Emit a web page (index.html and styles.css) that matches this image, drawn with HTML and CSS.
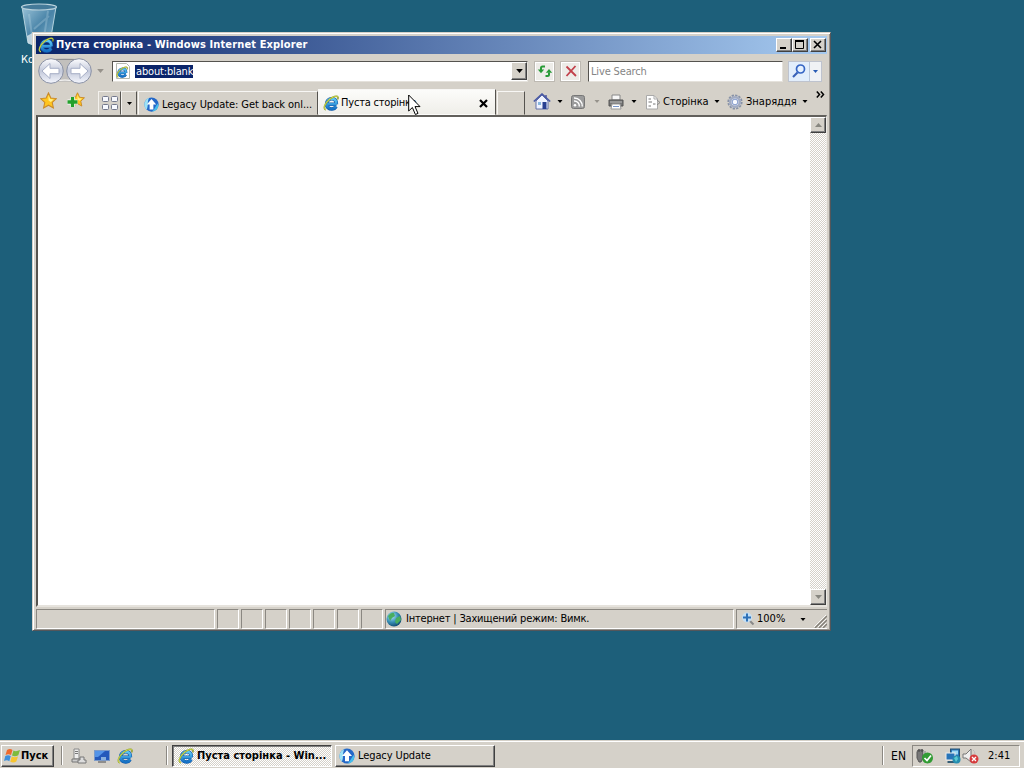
FILE: index.html
```html
<!DOCTYPE html>
<html lang="uk">
<head>
  <meta charset="UTF-8" />
  <title>Пуста сторінка - Windows Internet Explorer</title>
  <link rel="stylesheet" href="styles.css">
</head>
<body>

<!-- shared icons -->
<svg class="defs" width="0" height="0">
  <defs>
    <linearGradient id="blueE" x1="0" y1="0" x2="0" y2="1">
      <stop offset="0" stop-color="#5cc8f6"/><stop offset="1" stop-color="#1470c4"/>
    </linearGradient>
    <radialGradient id="globe" cx=".35" cy=".3" r=".8">
      <stop offset="0" stop-color="#b9ecff"/><stop offset=".5" stop-color="#3a92b8"/><stop offset="1" stop-color="#0b3f64"/>
    </radialGradient>
    <linearGradient id="bin" x1="0" y1="0" x2="1" y2="1">
      <stop offset="0" stop-color="#a9cfe3"/><stop offset=".5" stop-color="#4e88ad"/><stop offset="1" stop-color="#8fbdd6"/>
    </linearGradient>
    <linearGradient id="round" x1="0" y1="0" x2="0" y2="1">
      <stop offset="0" stop-color="#fdfdff"/><stop offset=".5" stop-color="#c3c9da"/><stop offset="1" stop-color="#f4f6fd"/>
    </linearGradient>
  </defs>
  <symbol id="ie" viewBox="0 0 16 16">
    <path d="M13.400 9.200H5M13 11.400C12 13.300 10.600 14 8.800 14C5.800 14 3.600 12 3.600 9C3.600 6 5.800 3.800 8.800 3.800C11.800 3.800 13.400 6 13.400 9.200" fill="none" stroke="#1158a8" stroke-width="3.600"/>
    <path d="M13.400 9.200H5M13 11.400C12 13.300 10.600 14 8.800 14C5.800 14 3.600 12 3.600 9C3.600 6 5.800 3.800 8.800 3.800C11.800 3.800 13.400 6 13.400 9.200" fill="none" stroke="url(#blueE)" stroke-width="2.500"/>
    <path d="M3 14.800C-.2 14.300 1.500 8.500 6 4.800C9.500 1.700 14.300 .2 15 2.200C15.200 3 15 3.800 14.600 4.500" fill="none" stroke="#8d9a2a" stroke-width="1.500"/>
    <path d="M3 14.800C-.2 14.300 1.500 8.500 6 4.800C9.500 1.700 14.300 .2 15 2.200" fill="none" stroke="#d6e154" stroke-width=".9"/>
  </symbol>
  <symbol id="legacy" viewBox="0 0 16 16">
    <circle cx="8" cy="8" r="7.600" fill="#2468c8"/>
    <path d="M1.500 12A7.500 7.500 0 0 1 5.500 .9C3 5 5 10 2.800 13.500Z" fill="#9be2f6"/>
    <path d="M15.400 9A7.500 7.500 0 0 1 8.500 15.500C12 12.500 12 10 14.800 7Z" fill="#45bdec"/>
    <path d="M8 2.200L13 8H10V13.200H6V8H3Z" fill="#fff"/>
  </symbol>
  <symbol id="down" viewBox="0 0 5 3"><path d="M0 0H5L2.500 3Z" fill="currentColor"/></symbol>
  <symbol id="star" viewBox="0 0 16 16">
    <path d="M8 .8L10.200 5.600L15.400 6.200L11.500 9.800L12.600 15L8 12.400L3.400 15L4.500 9.800L.6 6.200L5.800 5.600Z" fill="#ffc51f" stroke="#c98a2a" stroke-width="1"/>
    <path d="M8 3L9.500 6.600L12.800 7L10.200 9.300L8 8Z" fill="#fff08a"/>
  </symbol>
</svg>

<div class="desktop">

  <div class="shortcut">
    <svg width="40" height="46" viewBox="0 0 40 46">
      <path d="M3 5L9 41Q20 47 31 41L37 5Z" fill="url(#bin)" stroke="#c4dfea" stroke-width="1" opacity=".9"/>
      <path d="M10 12L14 41M29 9L24 42M15 27L30 14" stroke="#d2e9f2" stroke-width="2" opacity=".25"/>
      <path d="M8 34L15 30L20 34L28 31L32 38L30 42Q20 46 9 41Z" fill="#e6eef2" opacity=".75"/>
      <ellipse cx="20" cy="5" rx="17.500" ry="3" fill="#447a99" stroke="#b9d2dc" stroke-width="1.200"/>
    </svg>
    <span>Кошик</span>
  </div>

  <div class="window">
    <div class="titlebar">
      <svg class="app-icon" width="16" height="16"><use href="#ie"/></svg>
      <span class="title">Пуста сторінка - Windows Internet Explorer</span>
      <div class="controls">
        <span class="ctl"><svg width="14" height="12"><path d="M3 9H9" stroke="#000" stroke-width="2"/></svg></span>
        <span class="ctl"><svg width="14" height="12"><path d="M2.500 1V9.500H10.500V1" fill="none" stroke="#000"/><path d="M2 2H11" stroke="#000" stroke-width="2"/></svg></span>
        <span class="ctl close"><svg width="14" height="12"><path d="M3 2L10 9M10 2L3 9" stroke="#000" stroke-width="1.600"/></svg></span>
      </div>
    </div>

    <div class="navbar">
      <svg class="travel" width="56" height="28" viewBox="0 0 56 28">
        <path d="M12 3Q28 -1 44 3L40 25H16Z" fill="#c2c0bd"/>
        <path d="M12 2.500H44" stroke="#8c8c90" fill="none"/>
        <path d="M12 25Q28 21 44 25" stroke="#fff" fill="none"/>
        <circle cx="14" cy="14" r="12.300" fill="url(#round)" stroke="#8990a4"/>
        <circle cx="42" cy="14" r="12.300" fill="url(#round)" stroke="#8990a4"/>
        <path d="M5 14L13 6.500V11.300H22V16.700H13V21.500Z" fill="#fff" stroke="#a6aec6"/>
        <path d="M51 14L43 6.500V11.300H34V16.700H43V21.500Z" fill="#fff" stroke="#a6aec6"/>
      </svg>
      <svg class="arrow dim recent" width="7" height="4"><use href="#down"/></svg>
      <div class="address">
        <svg width="16" height="16" viewBox="0 0 16 16">
          <path d="M1.500 .5H11.500L14.500 3.500V15.500H1.500Z" fill="#fff" stroke="#b5b8b0"/>
          <svg x="1" y="3" width="12" height="12"><use href="#ie"/></svg>
        </svg>
        <span class="url">about:blank</span>
        <span class="combo"><svg class="arrow" width="7" height="4"><use href="#down"/></svg></span>
      </div>
      <span class="tool">
        <svg width="16" height="16" viewBox="0 0 16 16" fill="none" stroke="#299b38" stroke-width="2">
          <path d="M8 3.500H5.500Q4 3.500 4 5V7"/><path d="M.8 6.500H7.200L4 10.200Z" fill="#299b38" stroke="none"/>
          <path d="M8.500 13H10.500Q12 13 12 11.500V9.500"/><path d="M8.800 9.700H15.200L12 6Z" fill="#299b38" stroke="none"/>
        </svg>
      </span>
      <span class="tool stop">
        <svg width="16" height="16" viewBox="0 0 16 16"><path d="M3.500 3.500L13 13M12.500 3L3.500 13" stroke="#c2414b" stroke-width="1.800"/></svg>
      </span>
      <div class="search">Live Search</div>
      <div class="search-btn">
        <span class="lens"><svg width="16" height="16" viewBox="0 0 16 16"><path d="M6.500 9.500L2 14" stroke="#3a62b8" stroke-width="2.200"/><circle cx="9.500" cy="6" r="4" fill="#e5f1ff" stroke="#3565c4" stroke-width="1.700"/></svg></span>
        <svg class="arrow blue" width="5" height="3"><use href="#down"/></svg>
      </div>
    </div>

    <div class="tabbar">
      <div class="favs">
        <svg width="17" height="17"><use href="#star"/></svg>
        <svg width="18" height="17" viewBox="0 0 18 17">
          <svg x="3" y="0" width="15" height="15"><use href="#star"/></svg>
          <path d="M5.500 5V15M.5 10H10.500" stroke="#fff" stroke-width="5"/>
          <path d="M5.500 5V15M.5 10H10.500" stroke="#23a02c" stroke-width="3.400"/>
        </svg>
      </div>
      <div class="quick">
        <svg width="16" height="14" viewBox="0 0 16 14" fill="#f7f9ff" stroke="#74798c">
          <rect x=".5" y=".5" width="6" height="5" rx="1"/><rect x="9.500" y=".5" width="6" height="5" rx="1"/>
          <rect x=".5" y="8.500" width="6" height="5" rx="1"/><rect x="9.500" y="8.500" width="6" height="5" rx="1"/>
        </svg>
      </div>
      <div class="quick-list"><svg class="arrow" width="5" height="3"><use href="#down"/></svg></div>
      <div class="tab">
        <svg width="15" height="15"><use href="#legacy"/></svg>
        <span class="t-legacy">Legacy Update: Get back onl...</span>
      </div>
      <div class="tab active">
        <svg width="16" height="16"><use href="#ie"/></svg>
        <span class="t-blank">Пуста сторінка</span>
        <svg class="tab-close" width="9" height="9" viewBox="0 0 9 9"><path d="M1 1L8 8M8 1L1 8" stroke="#000" stroke-width="2.200"/></svg>
      </div>
      <div class="tab new"></div>
      <div class="commands">
        <svg width="18" height="17" viewBox="0 0 18 17">
          <path d="M12 2H14V6H12Z" fill="#7078a8"/>
          <path d="M3 8V16H15V8L9 2Z" fill="#eef2ff" stroke="#6370a8"/>
          <path d="M.8 8.500L9 1L17.200 8.500" fill="none" stroke="#4858a5" stroke-width="1.600"/>
          <rect x="5" y="9" width="3" height="3" fill="#89b7df"/><rect x="9.500" y="9" width="4" height="7" fill="#283f91"/>
        </svg>
        <svg class="arrow a1" width="6" height="3"><use href="#down"/></svg>
        <svg class="rss" width="14" height="14" viewBox="0 0 14 14">
          <rect x=".5" y=".5" width="13" height="13" rx="2" fill="#9b9b9b" stroke="#777"/>
          <circle cx="4" cy="10.300" r="1.300" fill="#fff"/><path d="M3 6A5 5 0 0 1 8.300 11.500M3 3A8 8 0 0 1 11.300 11.500" fill="none" stroke="#fff" stroke-width="1.400"/>
        </svg>
        <svg class="arrow dim a2" width="6" height="3"><use href="#down"/></svg>
        <svg class="printer" width="16" height="16" viewBox="0 0 16 16">
          <path d="M4 1H12V6H4Z" fill="#f7f7f7" stroke="#888"/>
          <path d="M1 6H15V12H1Z" fill="#777" stroke="#555"/><path d="M2 8H14" stroke="#bbb"/>
          <path d="M4 10H12L13 15H3Z" fill="#fff" stroke="#999"/><path d="M5 12.500H11" stroke="#7896ca"/>
        </svg>
        <svg class="arrow a3" width="6" height="3"><use href="#down"/></svg>
        <svg class="page" width="16" height="16" viewBox="0 0 16 16">
          <path d="M1.500 1.500H9L12.500 5V15H1.500Z" fill="#fff" stroke="#aaa"/><path d="M9 1.500V5H12.500" fill="none" stroke="#aaa"/>
          <path d="M3.500 5H6M3.500 8H7M8 10H10.500M3.500 12H6" stroke="#777"/><path d="M12 6L15 8.500L12 11" fill="none" stroke="#888"/>
        </svg>
        <span class="t-page">Сторінка</span>
        <svg class="arrow a4" width="6" height="3"><use href="#down"/></svg>
        <svg class="gear" width="16" height="16" viewBox="0 0 16 16">
          <circle cx="8" cy="8" r="6.700" fill="none" stroke="#8791a6" stroke-width="1.800" stroke-dasharray="2.300 1.200"/>
          <circle cx="8" cy="8" r="4.800" fill="#e9effc" stroke="#a2acc3" stroke-width="2.600"/><circle cx="8" cy="8" r="2.800" fill="#f8faff" stroke="#849bcb"/>
        </svg>
        <span class="t-tools">Знаряддя</span>
        <svg class="arrow a5" width="6" height="3"><use href="#down"/></svg>
        <svg class="more" width="9" height="7" viewBox="0 0 9 7"><path d="M.8 .5L3.500 3.500L.8 6.500M4.800 .5L7.500 3.500L4.800 6.500" fill="none" stroke="#000" stroke-width="1.500"/></svg>
      </div>
    </div>

    <div class="view">
      <div class="page-area"></div>
      <div class="scrollbar">
        <span class="sb"><svg width="7" height="4" viewBox="0 0 7 4"><path d="M0 4H7L3.500 0Z" fill="#888780"/></svg></span>
        <span class="sb"><svg width="7" height="4" viewBox="0 0 7 4"><path d="M0 0H7L3.500 4Z" fill="#888780"/></svg></span>
      </div>
    </div>

    <div class="statusbar">
      <div class="pane message"></div>
      <div class="pane"></div>
      <div class="pane"></div>
      <div class="pane"></div>
      <div class="pane"></div>
      <div class="pane"></div>
      <div class="pane"></div>
      <div class="pane"></div>
      <div class="pane zone">
        <svg width="16" height="16" viewBox="0 0 16 16">
          <circle cx="8" cy="8" r="7.500" fill="url(#globe)"/>
          <path d="M2 5Q5 1 8 2L9 5L6 7L4 10ZM10 7L14 5L15 9L11 13L9 11Z" fill="#48ae60"/>
        </svg>
        <span class="t-zone">Інтернет | Захищений режим: Вимк.</span>
      </div>
      <div class="pane zoom">
        <svg width="14" height="14" viewBox="0 0 14 14">
          <path d="M8 8L12.500 12.500" stroke="#888" stroke-width="2"/><circle cx="6" cy="5.500" r="5" fill="#c3dff5"/>
          <path d="M6 1.500V9.500M2 5.500H10" stroke="#2f71b7" stroke-width="2"/>
        </svg>
        <span class="t-zoom">100%</span>
        <svg class="arrow" width="6" height="3"><use href="#down"/></svg>
        <svg class="grip" width="13" height="13" viewBox="0 0 13 13"><path d="M1 13L13 1M5 13L13 5M9 13L13 9" stroke="#848078" stroke-width="1.500"/><path d="M0 12L12 0M4 12L12 4M8 12L12 8" stroke="#fff" stroke-width=".8"/></svg>
      </div>
    </div>
  </div>

  <svg class="cursor" width="13" height="22" viewBox="0 0 13 22">
    <path d="M.7 1V17L4.400 13.500L7.400 20.500L10 19.400L7 12.600H12Z" fill="#fff" stroke="#000"/>
  </svg>
</div>

<div class="taskbar">
  <div class="start">
    <svg width="17" height="16" viewBox="0 0 17 16">
      <path d="M3 2Q6 0 8.500 2L7 7Q4.500 5.500 1.500 7Z" fill="#ee6a2c"/>
      <path d="M9.500 2.500Q12 4 16 2L14.300 7.300Q11 9 8 7.500Z" fill="#7dbb3c"/>
      <path d="M1.300 8Q4 6.500 6.800 8L5.300 13.200Q3 11.500 0 13Z" fill="#3d8fdc"/>
      <path d="M7.800 8.600Q10.500 10 14 8.500L12.300 13.600Q9.500 15.500 6.300 13.800Z" fill="#f8c52f"/>
    </svg>
    <span class="t-start">Пуск</span>
  </div>
  <i class="sep s1"></i>
  <div class="launch">
    <svg width="16" height="16" viewBox="0 0 16 16">
      <path d="M3 1H8V11H3Z" fill="#eee" stroke="#888"/><path d="M4 3.500H7M4 5.500H7" stroke="#777"/>
      <path d="M1 11H10V14H1Z" fill="#ccc" stroke="#777"/><path d="M9 9H13V12H15V15H7V12H9Z" fill="#ddd" stroke="#777"/>
    </svg>
    <svg width="16" height="14" viewBox="0 0 16 14">
      <rect x=".5" y="1.500" width="15" height="10" fill="#2459bb" stroke="#7d9bc8"/><path d="M1 2H11L4 8H1Z" fill="#5494e8"/>
      <path d="M4 13H12" stroke="#777" stroke-width="1.500"/><rect x="7" y="8" width="5" height="3" fill="#88b0dd"/>
    </svg>
    <svg width="16" height="16"><use href="#ie"/></svg>
  </div>
  <i class="sep s2"></i>
  <div class="task current">
    <svg width="16" height="16"><use href="#ie"/></svg>
    <span class="t-task">Пуста сторінка - Win...</span>
  </div>
  <div class="task">
    <svg width="16" height="16"><use href="#legacy"/></svg>
    <span class="t-update">Legacy Update</span>
  </div>
  <i class="sep s3"></i>
  <span class="lang">EN</span>
  <div class="tray">
    <svg width="18" height="16" viewBox="0 0 18 16">
      <path d="M2 2H7V10L5 14H3L1 10V4Z" fill="#777" stroke="#555"/><path d="M3 1V4M6 1V4" stroke="#444"/><path d="M7 3H10V9H7Z" fill="#aaa"/>
      <circle cx="11.500" cy="10" r="5.500" fill="#329c35"/><path d="M8.500 10L11 12.500L15 7.500" fill="none" stroke="#fff" stroke-width="1.700"/>
    </svg>
    <svg class="net" width="16" height="16" viewBox="0 0 16 16">
      <rect x="5.500" y="1" width="9" height="8" fill="#2874b8" stroke="#255070"/><rect x="7" y="2.500" width="6" height="4" fill="#9bd8f3"/>
      <rect x="1" y="5" width="9" height="7" fill="#2874b8" stroke="#eee"/><path d="M2.500 14H9" stroke="#345c75" stroke-width="2"/>
      <circle cx="11.500" cy="11.500" r="4" fill="#258caf"/><path d="M9 10L12 8L13 11L11 14Z" fill="#5ac8d0"/>
    </svg>
    <svg class="sound" width="17" height="16" viewBox="0 0 17 16">
      <path d="M1 6H4L9 1V14L4 10H1Z" fill="#eee" stroke="#777"/><circle cx="12" cy="11" r="4.500" fill="#d63b3d"/>
      <path d="M10 9L14 13M14 9L10 13" stroke="#fff" stroke-width="1.300"/><path d="M11 2Q13 3 13 6" fill="none" stroke="#bbb"/>
    </svg>
    <span class="clock">2:41</span>
  </div>
</div>

</body>
</html>
```
FILE: styles.css
```css
* {
  box-sizing: border-box;
}
body {
  margin: 0;
  width: 1024px;
  height: 768px;
  overflow: hidden;
  display: flex;
  flex-direction: column;
  background: #1d5f7a;
  color: #000;
  font: 11px/14px "DejaVu Sans Condensed", "DejaVu Sans", sans-serif;
}
svg {
  display: block;
  flex: none;
}
span {
  white-space: nowrap;
}
.defs {
  position: absolute;
}
.desktop {
  position: relative;
  height: 740px;
}
.shortcut {
  position: absolute;
  left: 19px;
  top: 2px;
  width: 40px;
  color: #fff;
}
.shortcut span {
  display: block;
  margin: 5px 0 0 2px;
}

/* browser window */
.window {
  position: absolute;
  left: 32px;
  top: 32px;
  width: 799px;
  height: 599px;
  padding: 2px 3px 1px;
  display: flex;
  flex-direction: column;
  background: #d5d1c9;
  border: 1px solid;
  border-color: #d5d1c9 #55565a #55565a #d5d1c9;
  box-shadow: inset 1px 1px #fff, inset -1px -1px #96938d;
}
.titlebar {
  display: flex;
  align-items: center;
  height: 18px;
  margin-top: 1px;
  padding: 0 1px 0 2px;
  background: linear-gradient(to right, #0a246a, #a6caf0);
  color: #fff;
  font-weight: bold;
}
.title {
  margin-left: 2px;
  letter-spacing: .13px;
}
.controls {
  display: flex;
  margin-left: auto;
}
.ctl, .combo, .sb {
  background: #d5d1c9;
  border: 1px solid;
  border-color: #fff #404040 #404040 #fff;
  box-shadow: inset -1px -1px #808080;
}
.ctl {
  width: 16px;
  height: 14px;
}
.ctl.close {
  margin-left: 2px;
}

.navbar {
  display: flex;
  align-items: center;
  height: 34px;
  padding-left: 1px;
}
.arrow {
  color: #000;
}
.arrow.dim {
  color: #96928b;
}
.arrow.blue {
  color: #285bb4;
}
.recent {
  margin-left: 4px;
}
.address {
  display: flex;
  align-items: center;
  width: 416px;
  height: 21px;
  margin-left: 8px;
  padding: 0 0 0 2px;
  background: #fff;
  border: 1px solid;
  border-color: #55534f #e5e2dc #e5e2dc #55534f;
}
.url {
  margin-left: 4px;
  padding: 0 0 0 1px;
  line-height: 13px;
  letter-spacing: -.16px;
  background: #0a246a;
  color: #fff;
}
.combo {
  display: flex;
  align-items: center;
  justify-content: center;
  width: 16px;
  height: 18px;
  margin-left: auto;
}
.tool {
  display: flex;
  align-items: center;
  justify-content: center;
  width: 21px;
  height: 21px;
  margin-left: 6px;
  background: #edece8;
  border: 1px solid #bdb9b2;
  box-shadow: inset 0 0 0 1px #fff;
}
.stop {
  margin-left: 5px;
}
.search {
  width: 195px;
  height: 21px;
  margin-left: 7px;
  padding: 3px 2px;
  background: #fff;
  border: 1px solid;
  border-color: #55534f #e5e2dc #e5e2dc #55534f;
  color: #858585;
  letter-spacing: -.15px;
}
.search-btn {
  display: flex;
  align-items: center;
  width: 34px;
  height: 21px;
  margin-left: 5px;
  background: #f0f2f5;
  border: 1px solid #bec3ce;
}
.lens {
  width: 21px;
  height: 19px;
  padding: 1px 2px;
  margin-right: 3px;
  background: #e2eefc;
  border-right: 1px solid #bcc9dc;
}

.tabbar {
  display: flex;
  align-items: flex-end;
  height: 27px;
}
.favs {
  display: flex;
  gap: 10px;
  align-self: center;
  width: 62px;
  padding: 0 0 2px 4px;
}
.quick, .quick-list {
  display: flex;
  align-items: center;
  justify-content: center;
  height: 24px;
  border: 1px solid;
  border-color: #f3f1ed #55534f transparent #f3f1ed;
}
.quick {
  width: 23px;
}
.quick-list {
  width: 16px;
}
.tab {
  display: flex;
  align-items: center;
  width: 180px;
  height: 24px;
  margin-left: 1px;
  padding: 3px 0 0 5px;
  border: 1px solid;
  border-color: #f8f7f5 #55534f transparent #f8f7f5;
}
.tab span {
  margin-left: 3px;
  letter-spacing: -.08px;
}
.tab.active {
  width: 178px;
  height: 26px;
  margin-left: 0;
  padding: 2px 0 0 4px;
  background: linear-gradient(#fcfcfa, #efeee9);
}
.tab.active span {
  margin-left: 2px;
  letter-spacing: -.2px;
}
.tab-close {
  margin-left: auto;
  margin-right: 7px;
}
.tab.new {
  width: 28px;
  margin-left: 1px;
}
.commands {
  display: flex;
  align-items: center;
  height: 27px;
  margin-left: 8px;
}
.a1 { margin-left: 6px; }
.rss { margin-left: 8px; }
.a2 { margin-left: 9px; }
.printer { margin-left: 8px; }
.a3 { margin-left: 7px; }
.page { margin-left: 8px; }
.t-page { width: 46px; margin-left: 2px; letter-spacing: -.1px; }
.a4 { margin-left: 5px; }
.gear { margin-left: 7px; }
.t-tools { width: 52px; margin-left: 3px; }
.a5 { margin-left: 4px; }
.more {
  margin: 0 0 14px 8px;
}

.view {
  display: flex;
  height: 492px;
  background: #fff;
  border: 2px solid;
  border-right-width: 1px;
  border-color: #62605c #eceae5 #e6e3dd #55534f;
}
.page-area {
  flex: 1;
}
.scrollbar {
  display: flex;
  flex-direction: column;
  justify-content: space-between;
  width: 16px;
  background: repeating-conic-gradient(#fff 0 25%, #d5d1c9 0 50%) 0 0 / 2px 2px;
}
.sb {
  display: flex;
  align-items: center;
  justify-content: center;
  height: 16px;
}

.statusbar {
  display: flex;
  gap: 2px;
  height: 20px;
  margin-top: 2px;
}
.pane {
  width: 22px;
  border: 1px solid;
  border-color: #8b8882 #fff #fff #8b8882;
}
.message {
  width: 179px;
}
.zone {
  display: flex;
  align-items: center;
  width: 349px;
  padding-left: 0;
}
.zone span {
  margin-left: 4px;
  letter-spacing: -.19px;
}
.zoom {
  display: flex;
  align-items: center;
  flex: 1;
  padding-left: 4px;
  border-right: 0;
}
.t-zoom {
  width: 30px;
  margin: 0 13px 0 2px;
}
.grip {
  align-self: flex-end;
  margin-left: auto;
}
.cursor {
  position: absolute;
  left: 408px;
  top: 94px;
}

/* taskbar */
.taskbar {
  display: flex;
  align-items: center;
  height: 28px;
  padding: 2px 4px 0 1px;
  background: #d5d1c9;
  border-top: 1px solid #d5d1c9;
  box-shadow: inset 0 1px #fff;
}
.start {
  display: flex;
  align-items: center;
  width: 53px;
  height: 22px;
  padding-left: 2px;
  border: 1px solid;
  border-color: #fff #404040 #404040 #fff;
  box-shadow: inset -1px -1px #808080;
  font-weight: bold;
}
.sep {
  width: 2px;
  height: 19px;
  border-left: 1px solid #8b8882;
  border-right: 1px solid #fff;
}
.s1 { margin-left: 7px; }
.s2 { margin-left: 33px; }
.s3 { margin-left: auto; }
.launch {
  display: flex;
  align-items: center;
  gap: 7px;
  margin-left: 8px;
}
.task {
  display: flex;
  align-items: center;
  width: 160px;
  height: 22px;
  margin-left: 3px;
  padding-left: 3px;
  border: 1px solid;
  border-color: #fff #404040 #404040 #fff;
  box-shadow: inset -1px -1px #808080;
}
.task span {
  margin-left: 3px;
}
.t-update {
  letter-spacing: -.1px;
}
.current {
  margin-left: 4px;
  padding: 1px 0 0 5px;
  background: repeating-conic-gradient(#fff 0 25%, #d5d1c9 0 50%) 0 0 / 2px 2px;
  border-color: #404040 #fff #fff #404040;
  box-shadow: inset 1px 1px #808080;
  font-weight: bold;
}
.lang {
  margin: 0 6px 0 7px;
  font-size: 12px;
}
.tray {
  display: flex;
  align-items: center;
  width: 108px;
  height: 22px;
  padding-left: 3px;
  border: 1px solid;
  border-color: #8b8882 #fff #fff #8b8882;
}
.net {
  margin-left: 11px;
}
.sound {
  margin-left: 1px;
}
.clock {
  margin-left: 9px;
}
```
